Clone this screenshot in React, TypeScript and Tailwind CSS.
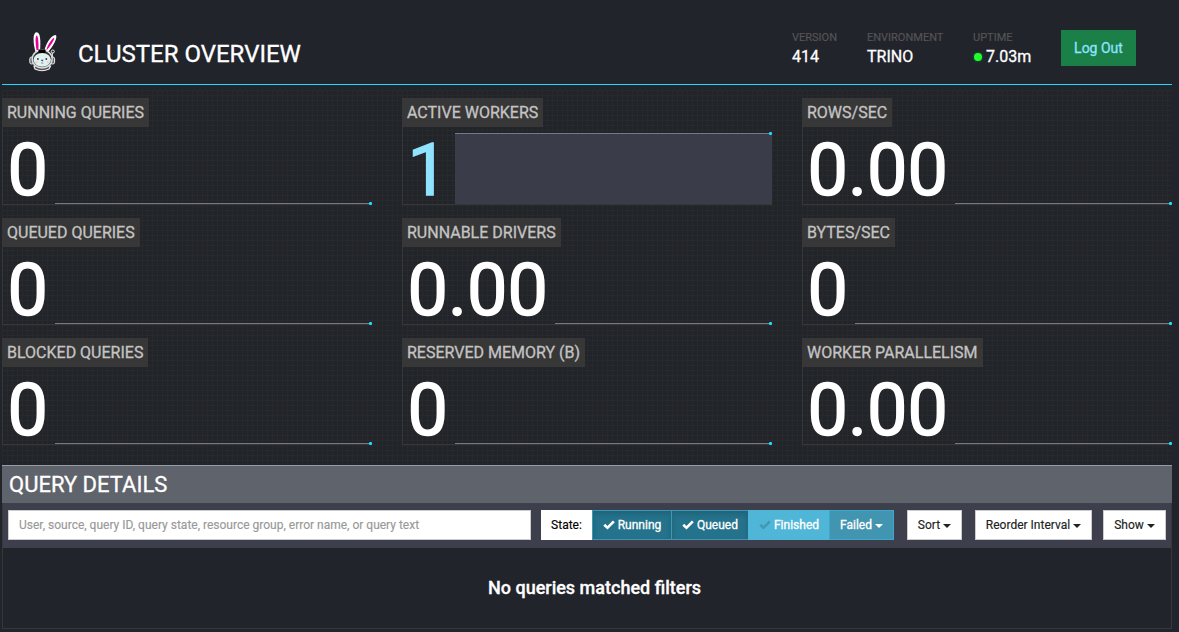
import { clsx } from "clsx";

const stats = [
  { label: "RUNNING QUERIES", value: "0" },
  { label: "ACTIVE WORKERS", value: "1", active: true },
  { label: "ROWS/SEC", value: "0.00" },
  { label: "QUEUED QUERIES", value: "0" },
  { label: "RUNNABLE DRIVERS", value: "0.00" },
  { label: "BYTES/SEC", value: "0" },
  { label: "BLOCKED QUERIES", value: "0" },
  { label: "RESERVED MEMORY (B)", value: "0" },
  { label: "WORKER PARALLELISM", value: "0.00" },
];

function Logo() {
  return (
    <svg width="30" height="42" viewBox="0 0 30 42" className="shrink-0">
      <path d="M6.500 21C4 12 3.500 1.800 7.500 1.300C11.500 1 11.800 10 11 20Z" fill="#fff" />
      <path d="M7.500 19C6.300 12 6.200 5 7.600 4.500C9.200 4.500 9.700 12 9.400 19Z" fill="#e5009b" />
      <path d="M15.500 20C16 13 23 3.500 26.500 4C29.500 5 24.500 15 19 21Z" fill="#fff" />
      <path d="M17.300 19.500C18 14.500 23 7.500 25.300 6.800C25.500 9 21.500 15 17.300 19.500Z" fill="#e5009b" />
      <path d="M23.300 27V21" stroke="#ddd" strokeWidth="1.200" />
      <circle cx="23.800" cy="20.500" r="1.500" fill="#222" stroke="#eee" />
      <rect x="0.800" y="26" width="4" height="7" rx="1.800" fill="#666" stroke="#eee" />
      <rect x="21.600" y="26" width="4" height="7" rx="1.800" fill="#666" stroke="#eee" />
      <path d="M5 35H21.500L20 38Q13 41.500 6 38Z" fill="#555" stroke="#eee" strokeWidth="1.200" />
      <ellipse cx="13.200" cy="28" rx="10" ry="9" fill="#333" stroke="#ddd" strokeWidth="1.400" />
      <path d="M9.500 18.500H16.500V22H9.500Z" fill="#000" />
      <ellipse cx="13.200" cy="28.800" rx="8.700" ry="6.900" fill="#dff1f1" />
      <circle cx="8.900" cy="28" r="0.900" fill="#333" />
      <circle cx="17.300" cy="28" r="0.900" fill="#333" />
      <path d="M12.200 29H14.200L13.200 30.200Z" fill="#333" stroke="#444" strokeWidth="0.500" />
      <path d="M12 32H14.400" stroke="#667" strokeWidth="0.700" />
      <circle cx="7.600" cy="31" r="1" fill="#f6c4cd" />
      <circle cx="18.800" cy="31" r="1" fill="#f6c4cd" />
    </svg>
  );
}

function Check({ className = "text-white" }) {
  return (
    <svg width="12" height="10" viewBox="0 0 12 10" className={clsx("mr-[3px]", className)}>
      <path d="M0.300 5.700L2.200 3.800L4.400 5.900L9.900 0.500L11.800 2.300L4.500 9.500Z" fill="currentColor" />
    </svg>
  );
}

function Caret() {
  return <span className="ml-[3px] mt-[2px] border-x-4 border-t-4 border-x-transparent border-t-current" />;
}

function Stat({ label, value, active }: { label: string; value: string; active?: boolean }) {
  return (
    <div className="flex h-[107px] flex-col items-start">
      <div className="h-[29px] bg-[#373737] px-[5px] text-[16px] leading-[29px] text-[#c4c4c4]">{label}</div>
      <div className="flex w-full flex-1 items-end border-b border-l border-[#373737] pl-[5px]">
        <span
          className={clsx(
            "-ml-[0.5px] mr-[0.5px] h-[69px] text-[72px] leading-[72px] [-webkit-text-stroke:1.4px]",
            active ? "text-[#8fe3ff]" : "text-white"
          )}
        >
          {value}
        </span>
        <div
          className={clsx(
            "relative ml-[7px] flex-1 border-t border-[#747889]",
            active ? "h-[71px] bg-[#3a3d49]" : "h-px"
          )}
        >
          <span className="absolute right-0 -top-[2px] size-[3px] rounded-[1px] bg-[#1edcff]" />
        </div>
      </div>
    </div>
  );
}

function Info({ label, children }: { label: string; children: React.ReactNode }) {
  return (
    <div>
      <div className="text-[11px] leading-[16px] text-[#555] [-webkit-text-stroke:0.15px]">{label}</div>
      <div className="flex items-center text-[16px] leading-[21px]">{children}</div>
    </div>
  );
}

function MenuButton({ children, className }: { children: string; className: string }) {
  return (
    <button
      className={clsx(
        "flex h-[30px] items-center justify-center border border-[#ccc] bg-white text-[12px] text-[#222]",
        className
      )}
    >
      {children}
      <Caret />
    </button>
  );
}

export default function App() {
  return (
    <div className="h-[632px] w-full overflow-hidden bg-[#22242c] pl-[2px] font-['Roboto',sans-serif] text-white [-webkit-text-stroke:0.3px]">
      <div className="w-[1170px]">
        <header className="flex h-[85px] border-b border-[#1edcff]">
          <div className="pl-[27px] pt-[31px]">
            <Logo />
          </div>
          <h1 className="ml-[19px] mt-[38px] text-[24px] leading-[32px]">CLUSTER OVERVIEW</h1>
          <div className="ml-auto mr-[36px] flex pt-[30px]">
            <div className="w-[75px] whitespace-nowrap">
              <Info label="VERSION">414</Info>
            </div>
            <div className="w-[106px]">
              <Info label="ENVIRONMENT">TRINO</Info>
            </div>
            <div className="w-[88px]">
              <Info label="UPTIME">
                <span className="ml-[1px] mr-[4px] size-2 rounded-full bg-[#1cff2c] shadow-[0_0_3px_#1cff2c66]" />
                7.03m
              </Info>
            </div>
            <button className="h-[36px] w-[75px] bg-[#1b7f48] text-[14px] text-[#8fe3ff]">Log Out</button>
          </div>
        </header>

        <div className="mt-[5px] grid h-[375px] grid-cols-3 content-start gap-x-[30px] gap-y-[13px] bg-[linear-gradient(#282a2a_1px,transparent_1px),linear-gradient(90deg,#282a2a_1px,transparent_1px)] bg-[size:5px_5px] pt-[8px]">
          {stats.map((stat) => (
            <Stat key={stat.label} {...stat} />
          ))}
        </div>

        <section className="h-[164px] border-b border-[#373737]">
          <h2 className="h-[38px] border-t border-[#989ba3] bg-[#5f636c] pl-[7px] text-[22px] leading-[37px]">
            QUERY DETAILS
          </h2>
          <div className="h-[125px] border-x border-[#373737]">
            <div className="flex h-[45px] items-start bg-[#3d404c] pl-[5px] pt-[7px] [-webkit-text-stroke:0.15px]">
              <input
                className="h-[30px] w-[523px] border border-[#ccc] bg-white px-[10px] text-[12px] placeholder:text-[#999]"
                placeholder="User, source, query ID, query state, resource group, error name, or query text"
              />
              <div className="ml-[10px] flex h-[30px] text-[12px]">
                <span className="flex w-[51px] items-center justify-center bg-white text-black">State:</span>
                <button className="flex w-[80px] items-center justify-center border border-[#3f97b3] bg-[#24728b] shadow-[inset_0_3px_5px_#00000020] [-webkit-text-stroke:0.3px]">
                  <Check />
                  Running
                </button>
                <button className="-ml-px flex w-[78px] items-center justify-center border border-[#3f97b3] bg-[#24728b] shadow-[inset_0_3px_5px_#00000020] [-webkit-text-stroke:0.3px]">
                  <Check />
                  Queued
                </button>
                <button className="-ml-px flex w-[82px] items-center justify-center bg-[#50b6d8] [-webkit-text-stroke:0.3px]">
                  <Check className="text-[#4299b5]" />
                  Finished
                </button>
                <button className="-ml-px flex w-[65px] items-center justify-center border border-[#3ba9cf] bg-[#4295b1] [-webkit-text-stroke:0.3px]">
                  Failed
                  <Caret />
                </button>
              </div>
              <MenuButton className="ml-[13px] w-[55px]">Sort</MenuButton>
              <MenuButton className="ml-[13px] w-[117px]">Reorder Interval</MenuButton>
              <MenuButton className="ml-[11px] w-[63px]">Show</MenuButton>
            </div>
            <h4 className="pt-[28px] pl-[15px] text-center text-[18px] leading-[24px] font-medium">
              No queries matched filters
            </h4>
          </div>
        </section>
      </div>
    </div>
  );
}
